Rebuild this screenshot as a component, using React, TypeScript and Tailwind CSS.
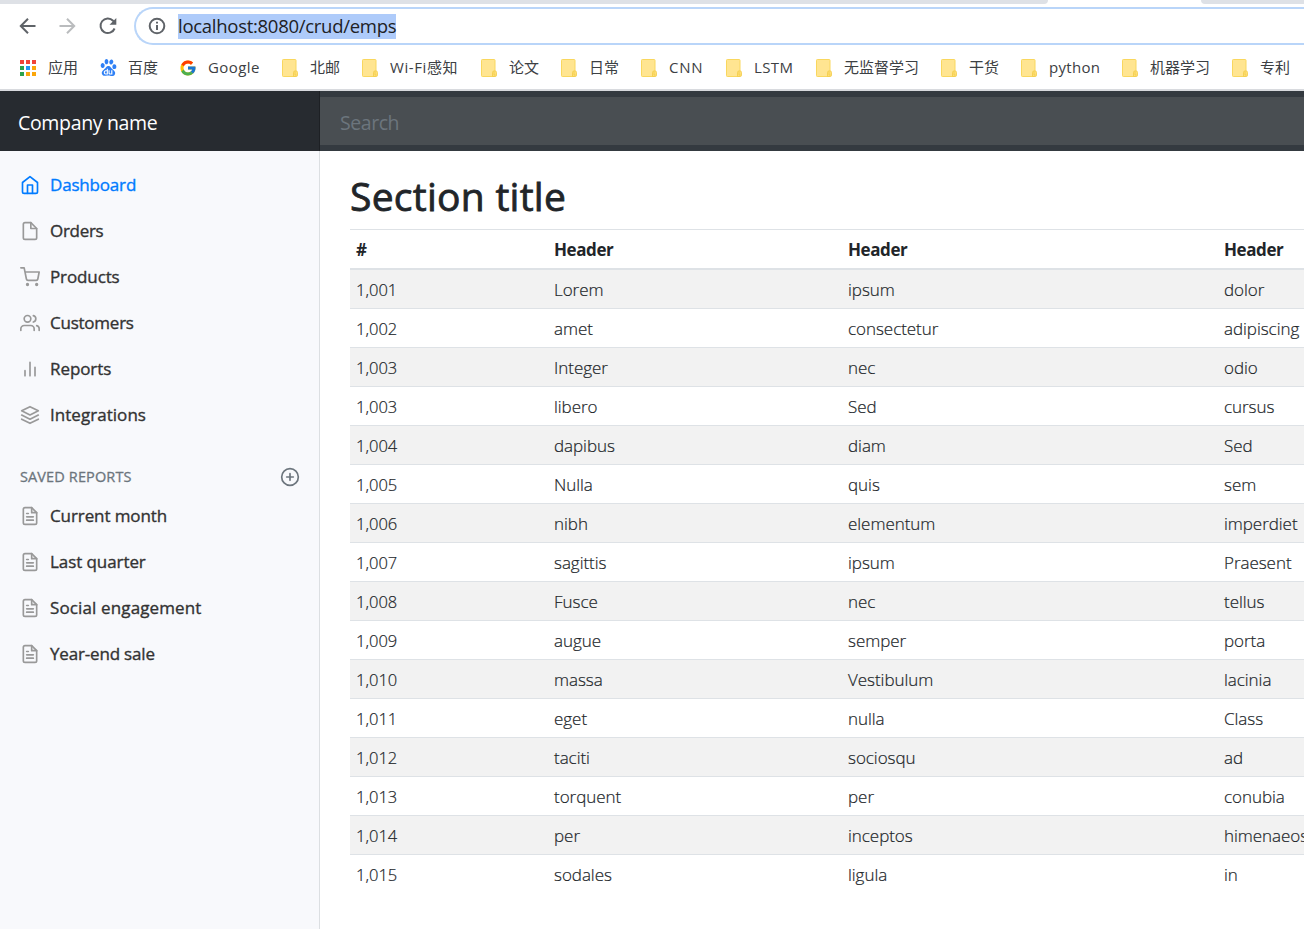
import type { ReactNode } from "react";
import { SiBaidu } from "react-icons/si";
import { FcGoogle } from "react-icons/fc";

function Feather({ children, className }: { children: ReactNode; className?: string }) {
  return (
    <svg
      viewBox="0 0 24 24"
      fill="none"
      stroke="currentColor"
      strokeWidth="2"
      strokeLinecap="round"
      strokeLinejoin="round"
      className={`h-5 w-5 shrink-0 ${className ?? ""}`}
    >
      {children}
    </svg>
  );
}

const FileText = () => (
  <Feather>
    <path d="M14 2H6a2 2 0 0 0-2 2v16a2 2 0 0 0 2 2h12a2 2 0 0 0 2-2V8z" />
    <path d="M14 2v6h6M16 13H8M16 17H8M10 9H8" />
  </Feather>
);

const Folder = () => (
  <svg viewBox="0 0 16 18" className="h-[18px] w-4">
    <rect x="0.5" y="0.5" width="13.5" height="17" rx="0.8" fill="#ffe591" stroke="#f9d75e" />
    <path d="M11.5 17.5V13.5a1.6 1.6 0 0 1 1.6-1.6h.9a1.5 1.5 0 0 1 1.5 1.5v2.8a1.3 1.3 0 0 1-1.3 1.3z" fill="#ffdf75" stroke="#f2cb49" strokeWidth="0.8" />
    <path d="M13 12.5v3.5h1.5" fill="none" stroke="#f2cb49" strokeWidth="0.8" />
  </svg>
);

const appColors = ["#f04438", "#f04438", "#f04438", "#2ba24c", "#2196f3", "#fba60a", "#2ba24c", "#fba60a", "#fba60a"];

const Apps = () => (
  <svg viewBox="0 0 16 16" className="h-4 w-4">
    {appColors.map((c, i) => (
      <rect key={i} x={(i % 3) * 6} y={Math.floor(i / 3) * 6} width="4" height="4" fill={c} />
    ))}
  </svg>
);

const bookmarks: { label: string; icon?: ReactNode; width: string; text?: string }[] = [
  { label: "应用", icon: <Apps />, width: "w-20" },
  { label: "百度", icon: <SiBaidu className="h-[17px] w-[17px] text-[#2f80f5]" />, width: "w-20" },
  { label: "Google", icon: <FcGoogle className="-ml-px h-[18px] w-[18px]" />, width: "w-[102px]", text: "tracking-[0.4px]" },
  { label: "北邮", width: "w-20" },
  { label: "Wi-Fi感知", width: "w-[119px]", text: "tracking-[0.6px]" },
  { label: "论文", width: "w-20" },
  { label: "日常", width: "w-20" },
  { label: "CNN", width: "w-[85px]", text: "tracking-[0.7px]" },
  { label: "LSTM", width: "w-[90px]", text: "tracking-[0.4px]" },
  { label: "无监督学习", width: "w-[125px]" },
  { label: "干货", width: "w-20" },
  { label: "python", width: "w-[101px]", text: "tracking-[0.3px]" },
  { label: "机器学习", width: "w-[110px]" },
  { label: "专利", width: "w-20" },
];

const nav: { label: string; icon: ReactNode; active?: boolean; tracking: string }[] = [
  {
    label: "Dashboard",
    active: true,
    tracking: "tracking-[-0.18px]",
    icon: (
      <Feather>
        <path d="M3 9l9-7 9 7v11a2 2 0 0 1-2 2H5a2 2 0 0 1-2-2z" />
        <path d="M9 22V12h6v10" />
      </Feather>
    ),
  },
  {
    label: "Orders",
    tracking: "tracking-[-0.3px]",
    icon: (
      <Feather>
        <path d="M13 2H6a2 2 0 0 0-2 2v16a2 2 0 0 0 2 2h12a2 2 0 0 0 2-2V9z" />
        <path d="M13 2v7h7" />
      </Feather>
    ),
  },
  {
    label: "Products",
    tracking: "tracking-[-0.12px]",
    icon: (
      <Feather>
        <circle cx="9" cy="21" r="1" />
        <circle cx="20" cy="21" r="1" />
        <path d="M1 1h4l2.68 13.39a2 2 0 0 0 2 1.61h9.72a2 2 0 0 0 2-1.61L23 6H6" />
      </Feather>
    ),
  },
  {
    label: "Customers",
    tracking: "tracking-[-0.24px]",
    icon: (
      <Feather>
        <path d="M17 21v-2a4 4 0 0 0-4-4H5a4 4 0 0 0-4 4v2" />
        <circle cx="9" cy="7" r="4" />
        <path d="M23 21v-2a4 4 0 0 0-3-3.87M16 3.13a4 4 0 0 1 0 7.75" />
      </Feather>
    ),
  },
  {
    label: "Reports",
    tracking: "tracking-[-0.08px]",
    icon: (
      <Feather>
        <path d="M18 20V10M12 20V4M6 20v-6" />
      </Feather>
    ),
  },
  {
    label: "Integrations",
    tracking: "tracking-[0.04px]",
    icon: (
      <Feather>
        <path d="M12 2L2 7l10 5 10-5-10-5z" />
        <path d="M2 17l10 5 10-5M2 12l10 5 10-5" />
      </Feather>
    ),
  },
];

const reports = [
  { label: "Current month", tracking: "tracking-[-0.1px]" },
  { label: "Last quarter", tracking: "tracking-[-0.08px]" },
  { label: "Social engagement", tracking: "tracking-[0.13px]" },
  { label: "Year-end sale", tracking: "tracking-[-0.18px]" },
];

const rows = [
  ["1,001", "Lorem", "ipsum", "dolor"],
  ["1,002", "amet", "consectetur", "adipiscing"],
  ["1,003", "Integer", "nec", "odio"],
  ["1,003", "libero", "Sed", "cursus"],
  ["1,004", "dapibus", "diam", "Sed"],
  ["1,005", "Nulla", "quis", "sem"],
  ["1,006", "nibh", "elementum", "imperdiet"],
  ["1,007", "sagittis", "ipsum", "Praesent"],
  ["1,008", "Fusce", "nec", "tellus"],
  ["1,009", "augue", "semper", "porta"],
  ["1,010", "massa", "Vestibulum", "lacinia"],
  ["1,011", "eget", "nulla", "Class"],
  ["1,012", "taciti", "sociosqu", "ad"],
  ["1,013", "torquent", "per", "conubia"],
  ["1,014", "per", "inceptos", "himenaeos"],
  ["1,015", "sodales", "ligula", "in"],
];

const columns = "grid grid-cols-[198px_294px_376px_200px] pl-1.5";

function NavItem({ label, icon, active, tracking }: { label: string; icon: ReactNode; active?: boolean; tracking: string }) {
  return (
    <a
      className={`flex h-[46px] items-center gap-2.5 pl-5 text-[17px] [-webkit-text-stroke:0.35px] ${tracking} ${
        active ? "text-[#007bff]" : "text-[#333]"
      }`}
    >
      <span className={active ? "" : "text-[#999]"}>{icon}</span>
      <span className="whitespace-nowrap">{label}</span>
    </a>
  );
}

export default function App() {
  return (
    <div className="flex h-[929px] w-[1304px] flex-col overflow-hidden bg-white font-['Open_Sans','Noto_Sans_CJK_SC',sans-serif] text-[#212529]">
      <div className="flex h-1 shrink-0 justify-between">
        <div className="w-[1048px] rounded-br-[5px] bg-[#dee1e6]" />
        <div className="w-[103px] rounded-bl-[5px] bg-[#dee1e6]" />
      </div>

      <div className="flex h-[45px] shrink-0 items-center pb-[1px] pl-[18px]">
        <svg viewBox="0 0 20 20" className="h-5 w-5 text-[#5f6368]" fill="none" stroke="currentColor" strokeWidth="2">
          <path d="M17.5 10H3M10 2.8L2.8 10l7.2 7.2" />
        </svg>
        <svg viewBox="0 0 20 20" className="ml-5 h-5 w-5 text-[#babcbe]" fill="none" stroke="currentColor" strokeWidth="2">
          <path d="M1.5 10H16M9 2.8l7.2 7.2L9 17.2" />
        </svg>
        <svg viewBox="0 0 20 20" className="ml-5 h-5 w-5 text-[#5f6368]" fill="none" stroke="currentColor" strokeWidth="2">
          <path d="M16.6 12.5a7.3 7.3 0 1 1-1.5-7.8L17 6.5" />
          <path d="M18.3 2v6.8h-6.8z" fill="currentColor" stroke="none" />
        </svg>
        <div className="ml-4 flex h-[38px] flex-1 items-center rounded-l-full border-2 border-r-0 border-[#b9d5f9] pl-3">
          <svg viewBox="0 0 18 18" className="h-[18px] w-[18px] text-[#5f6368]" fill="none" stroke="currentColor" strokeWidth="2">
            <circle cx="9" cy="9" r="7.3" />
            <path d="M9 8v5M9 4.8v1.8" />
          </svg>
          <span className="ml-3 flex h-[25px] w-[218px] items-center bg-[#aecbfa] text-[18.5px] tracking-[-0.28px] whitespace-nowrap text-[#202124]">
            localhost:8080/crud/emps
          </span>
        </div>
      </div>

      <div className="flex h-[42px] shrink-0 items-center border-b-2 border-[#d8dade] pb-[3px] pl-5 text-[15px] text-[#3c4043]">
        {bookmarks.map((b) => (
          <div key={b.label} className={`flex shrink-0 items-center ${b.width}`}>
            <span className="flex w-7 shrink-0 items-center">{b.icon ?? <Folder />}</span>
            <span className={`whitespace-nowrap ${b.text ?? ""}`}>{b.label}</span>
          </div>
        ))}
      </div>

      <header className="flex h-[60px] shrink-0 bg-[#343a40]">
        <div className="flex w-80 items-center border-r border-[#1d2024] bg-[#272b30] pt-[3px] pl-[18px] text-[19.5px] tracking-[-0.33px] text-white">
          Company name
        </div>
        <div className="my-1.5 flex flex-1 items-center bg-[#494e52] pt-1 pl-5 text-[19.5px] tracking-[-0.45px] text-[#6c757d]">
          Search
        </div>
      </header>

      <div className="flex min-h-0 flex-1">
        <aside className="w-80 shrink-0 border-r border-[#dcdfe2] bg-[#f8f9fc] pt-[11px]">
          <nav>
            {nav.map((n) => (
              <NavItem key={n.label} {...n} />
            ))}
          </nav>
          <div className="mt-[26px] flex h-[26px] items-center justify-between pr-[19px] pl-5 text-[#6c757d]">
            <h6 className="text-[14.5px] tracking-[0.12px] whitespace-nowrap [-webkit-text-stroke:0.3px]">SAVED REPORTS</h6>
            <Feather>
              <circle cx="12" cy="12" r="10" />
              <path d="M12 8v8M8 12h8" />
            </Feather>
          </div>
          <div className="mt-[3px]">
            {reports.map((r) => (
              <NavItem key={r.label} {...r} icon={<FileText />} />
            ))}
          </div>
        </aside>

        <main className="flex-1 overflow-hidden pt-[21px] pl-[30px]">
          <h2 className="h-[57px] text-[39px] leading-[48px] tracking-[0.27px] whitespace-nowrap [-webkit-text-stroke:0.8px]">Section title</h2>
          <div className="whitespace-nowrap">
            <div className={`${columns} h-[41px] items-center border-t border-b-2 border-[#dee2e6] pt-0.5 text-[17px] font-bold tracking-[-0.4px]`}>
              <span>#</span>
              <span>Header</span>
              <span>Header</span>
              <span>Header</span>
            </div>
            {rows.map((r, i) => (
              <div
                key={i}
                className={`${columns} items-center pt-0.5 font-light [-webkit-text-stroke:0.2px] ${i === 0 ? "h-[38px]" : "h-[39px] border-t border-[#dee2e6]"} ${
                  i % 2 === 0 ? "bg-[#f2f2f2]" : "bg-white"
                }`}
              >
                {r.map((c, j) => (
                  <span key={j} className={j === 0 ? "text-[16.5px]" : "text-[17px] tracking-[-0.04px]"}>
                    {c}
                  </span>
                ))}
              </div>
            ))}
          </div>
        </main>
      </div>
    </div>
  );
}
